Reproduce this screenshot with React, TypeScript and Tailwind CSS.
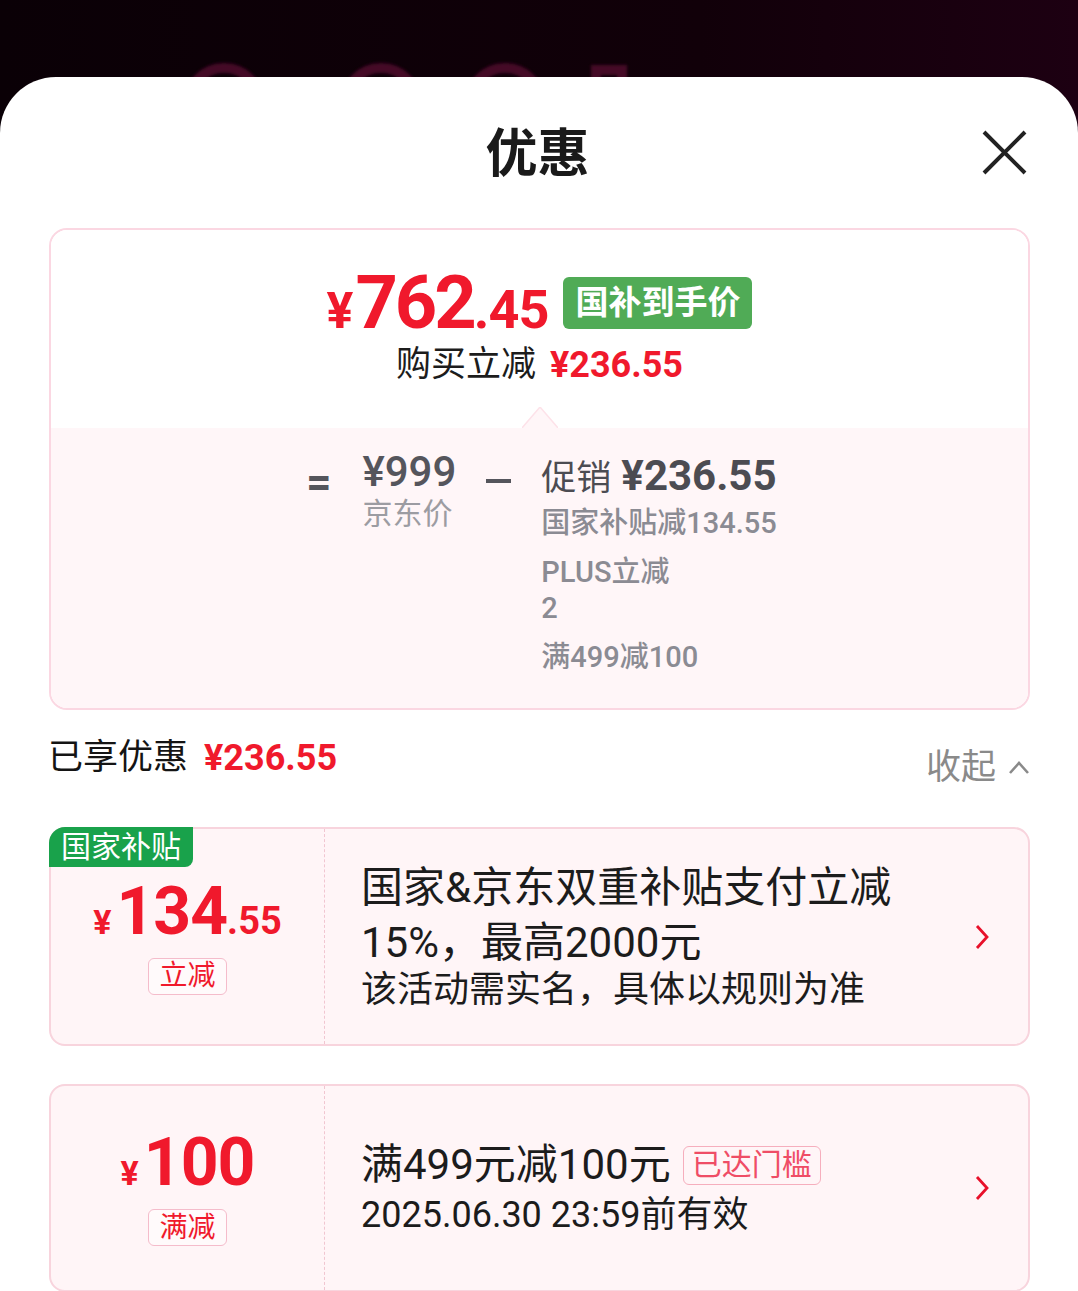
import React from "react";

const ChevronRight = () => (
  <svg width="14" height="26" viewBox="0 0 14 26" fill="none">
    <path d="M2 2 L12 13 L2 24" stroke="#e8102a" strokeWidth="2.8" strokeLinejoin="miter" />
  </svg>
);

const Tag = ({ children }: { children: React.ReactNode }) => (
  <span className="flex h-[37px] items-center rounded-[6px] border-[1.5px] border-[#f5bccb] bg-[#fffafb] px-[10px] text-[28px] leading-none text-[#f0192c]">
    {children}
  </span>
);

const App = () => {
  return (
    <div className="h-[1291px] overflow-hidden bg-[linear-gradient(90deg,#0a0006,#110009_65%,#1d0012)] font-['Roboto','Noto_Sans_CJK_SC',sans-serif]">
      {/* backdrop glyphs peeking above the sheet */}
      <svg width="1078" height="77" className="block">
        <defs>
          <filter id="soft">
            <feGaussianBlur stdDeviation="1.8" />
          </filter>
        </defs>
        <g stroke="#52092f" strokeWidth="10" fill="none" filter="url(#soft)" opacity="0.8">
          <circle cx="224" cy="104" r="36" />
          <circle cx="381" cy="104" r="36" />
          <circle cx="505" cy="104" r="36" />
          <path d="M596 90 L596 70 L622 70 L622 90" />
        </g>
      </svg>

      <div className="h-[1214px] rounded-t-[56px] bg-white px-[48px]">
        {/* header */}
        <div className="flex h-[151px] items-center justify-between pr-[3px]">
          <div className="w-[45px]" />
          <h1 className="mt-[5px] text-[52px] font-bold leading-none text-[#1a1a1a]">优惠</h1>
          <button className="flex h-[45px] w-[45px] items-center justify-center">
            <svg width="45" height="45" viewBox="0 0 45 45">
              <path d="M2 2 L43 43 M43 2 L2 43" stroke="#222" strokeWidth="4" />
            </svg>
          </button>
        </div>

        {/* price summary card */}
        <div className="ml-[1px] overflow-hidden rounded-[18px] border-2 border-[#fbd7e2]">
          <div className="flex flex-col items-center bg-white pt-[38px]">
            <div className="flex h-[70px] items-center gap-[15px]">
              <div className="flex items-baseline font-bold leading-none text-[#f0192c]">
                <span className="mr-[2px] text-[50px]">¥</span>
                <span className="text-[74px] tracking-[-3px]">762</span>
                <span className="text-[54px] tracking-[-1px]">.45</span>
              </div>
              <span className="flex h-[52px] items-center rounded-[6px] bg-[#50ab56] px-[12px] text-[33px] font-bold text-white">
                国补到手价
              </span>
            </div>
            <div className="mt-[5px] flex items-center gap-[14px] leading-[44px]">
              <span className="text-[35px] text-[#1c1c1c]">购买立减</span>
              <span className="text-[36px] font-bold text-[#f0192c]">¥236.55</span>
            </div>
            <svg width="36" height="21" viewBox="0 0 36 21" className="mt-[20px] block">
              <polygon points="0,21 18,0 36,21" fill="#fff6f8" />
              <path d="M0 21 L18 0 L36 21" stroke="#fde2e9" strokeWidth="1.5" fill="none" />
            </svg>
          </div>

          <div className="flex justify-center bg-[#fff6f8] pb-[33px] pl-[4px] pt-[20px]">
            <span className="mt-[10px] text-[44px] font-bold leading-[48px] text-[#55555c]">=</span>
            <div className="ml-[31px] flex flex-col">
              <span className="text-[42px] font-medium leading-[48px] text-[#55555c]">¥999</span>
              <span className="text-[30px] leading-[36px] text-[#9c9ca2]">京东价</span>
            </div>
            <span className="ml-[30px] mt-[31px] h-[4px] w-[25px] bg-[#55555c]" />
            <div className="ml-[30px] mt-[4px] flex flex-col">
              <div className="flex items-baseline gap-[10px] leading-[48px] text-[#4c4c52]">
                <span className="text-[35px]">促销</span>
                <span className="text-[42px] font-bold">¥236.55</span>
              </div>
              <div className="mt-[2px] flex flex-col gap-[13px] text-[29px] font-medium leading-[36px] text-[#8b8b93]">
                <span>国家补贴减134.55</span>
                <div className="flex flex-col">
                  <span>PLUS立减</span>
                  <span>2</span>
                </div>
                <span>满499减100</span>
              </div>
            </div>
          </div>
        </div>

        {/* enjoyed discount */}
        <div className="mt-[26px] flex h-[56px] items-start justify-between">
          <div className="flex items-center gap-[16px] leading-[44px]">
            <span className="text-[35px] text-[#141414]">已享优惠</span>
            <span className="text-[36px] font-bold text-[#f0192c]">¥236.55</span>
          </div>
          <div className="mt-[10px] flex items-center gap-[12px] leading-[44px]">
            <span className="text-[35px] text-[#8a8a8a]">收起</span>
            <svg width="22" height="16" viewBox="0 0 22 16" fill="none">
              <path d="M2 13 L11 3 L20 13" stroke="#8a8a8a" strokeWidth="2.6" />
            </svg>
          </div>
        </div>

        {/* coupon: national subsidy */}
        <div className="relative ml-[1px] mt-[35px] flex h-[219px] rounded-[16px] border-2 border-[#f8d4dd] bg-[#fff5f7]">
          <span className="absolute left-[-2px] top-[-2px] flex h-[40px] items-center rounded-br-[8px] rounded-tl-[16px] bg-[#19a24b] px-[12px] text-[30px] leading-none text-white">
            国家补贴
          </span>
          <div className="flex w-[274px] flex-col items-center justify-center gap-[13px] border-r-[1.5px] border-dashed border-[#f1c6d1]">
            <div className="flex items-baseline font-bold leading-none text-[#f0192c]">
              <span className="mr-[5px] text-[34px]">¥</span>
              <span className="text-[66px] tracking-[-1px]">134</span>
              <span className="text-[38px]">.55</span>
            </div>
            <Tag>立减</Tag>
          </div>
          <div className="flex flex-1 items-center justify-between pl-[36px] pr-[39px]">
            <div className="mt-[-4px] flex flex-col text-[#1c1c1c]">
              <span className="text-[42px] leading-[55px]">国家&amp;京东双重补贴支付立减</span>
              <span className="text-[42px] leading-[55px]">15%，最高2000元</span>
              <span className="text-[36px] leading-[40px]">该活动需实名，具体以规则为准</span>
            </div>
            <ChevronRight />
          </div>
        </div>

        {/* coupon: threshold discount */}
        <div className="ml-[1px] mt-[38px] flex h-[208px] rounded-[16px] border-2 border-[#f8d4dd] bg-[#fff5f7]">
          <div className="flex w-[274px] flex-col items-center justify-center gap-[13px] border-r-[1.5px] border-dashed border-[#f1c6d1]">
            <div className="flex items-baseline font-bold leading-none text-[#f0192c]">
              <span className="mr-[5px] text-[34px]">¥</span>
              <span className="text-[66px] tracking-[-1px]">100</span>
            </div>
            <Tag>满减</Tag>
          </div>
          <div className="flex flex-1 items-center justify-between pl-[36px] pr-[39px]">
            <div className="flex flex-col text-[#1c1c1c]">
              <div className="flex items-center gap-[12px] leading-[54px]">
                <span className="text-[42px]">满499元减100元</span>
                <span className="flex h-[39px] items-center rounded-[6px] border-[1.5px] border-[#f6aebd] px-[8px] text-[30px] leading-none text-[#ef4d66]">
                  已达门槛
                </span>
              </div>
              <span className="text-[36px] leading-[46px]">2025.06.30 23:59前有效</span>
            </div>
            <ChevronRight />
          </div>
        </div>
      </div>
    </div>
  );
};

export default App;
